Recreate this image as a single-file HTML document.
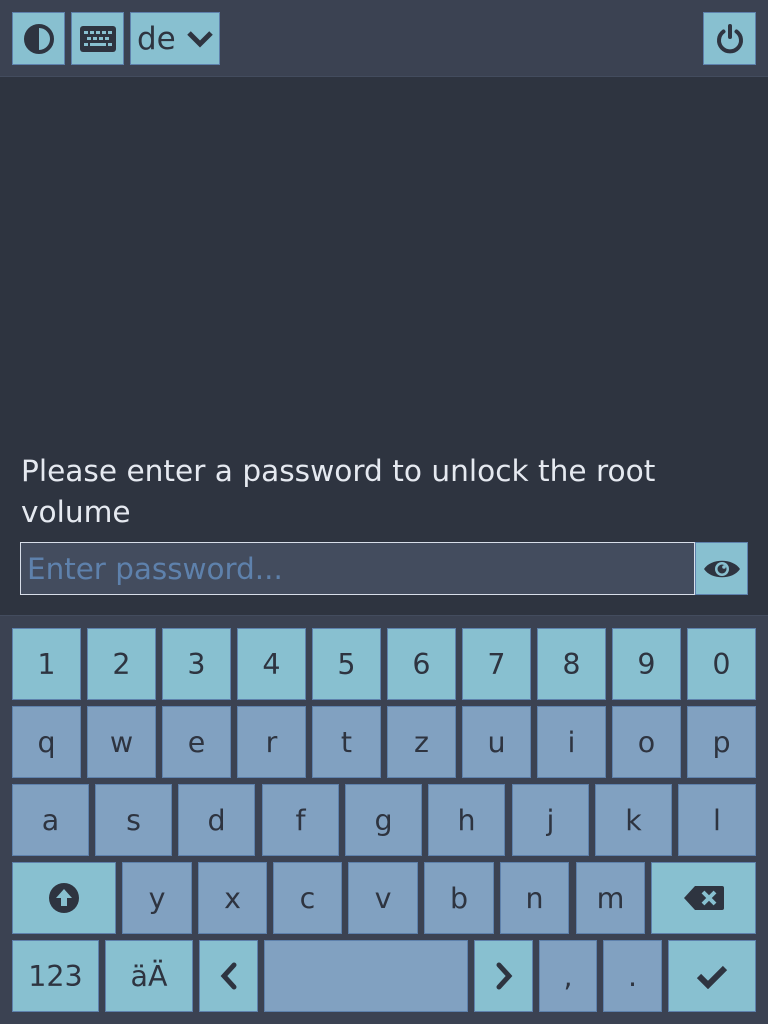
<!DOCTYPE html>
<html><head><meta charset="utf-8"><style>
*{margin:0;padding:0;box-sizing:border-box}
body{width:768px;height:1024px;background:#2e3440;position:relative;overflow:hidden;font-family:"DejaVu Sans","Liberation Sans",sans-serif;color:#2e3440}
.top{position:absolute;left:0;top:0;width:768px;height:77px;background:#3b4252;border-bottom:1px solid #434c5e}
.b{position:absolute;background:#88c0d0;border:1px solid #5e81ac;display:flex;align-items:center;justify-content:center}
.d{background:#81a1c1}
.k{font-size:28.5px}
.msg{position:absolute;left:21px;top:451px;color:#e5e9f0;font-size:29.6px;line-height:41px;width:720px}
.inp{position:absolute;left:20px;top:542px;width:675px;height:53px;background:#434c5e;border:1px solid #d8dee9;color:#5e81ac;font-size:29.4px;padding-left:6px;line-height:52px}
.kb{position:absolute;left:0;top:615px;width:768px;height:409px;background:#3b4252;border-top:1px solid #434c5e}
</style></head><body>
<div class="top"></div>
<div class="b" style="left:12px;top:12px;width:53px;height:53px"><svg width="32" height="32" viewBox="0 0 32 32"><circle cx="16" cy="16" r="13" fill="none" stroke="#2e3440" stroke-width="4"/><path d="M16 3a13 13 0 0 0 0 26z" fill="#2e3440"/></svg></div>
<div class="b" style="left:71px;top:12px;width:53px;height:53px"><svg width="38" height="28" viewBox="0 0 38 28"><rect x="1" y="1" width="36" height="26" rx="3" fill="#2e3440"/><g fill="#88c0d0"><rect x="5" y="6" width="4" height="3"/><rect x="11" y="6" width="4" height="3"/><rect x="17" y="6" width="4" height="3"/><rect x="23" y="6" width="4" height="3"/><rect x="29" y="6" width="4" height="3"/><rect x="8" y="12" width="4" height="3"/><rect x="14" y="12" width="4" height="3"/><rect x="20" y="12" width="4" height="3"/><rect x="26" y="12" width="4" height="3"/><rect x="5" y="18" width="4" height="3"/><rect x="11" y="18" width="16" height="3"/><rect x="29" y="18" width="4" height="3"/></g></svg></div>
<div class="b" style="left:130px;top:12px;width:90px;height:53px;justify-content:flex-start;padding-left:6px;font-size:31px">de<svg style="margin-left:10px" width="28" height="20" viewBox="0 0 28 20"><path d="M3 4l11 11L25 4" fill="none" stroke="#2e3440" stroke-width="5"/></svg></div>
<div class="b" style="left:703px;top:12px;width:53px;height:53px"><svg width="32" height="32" viewBox="0 0 32 32"><path d="M9.5 8.5a11 11 0 1 0 13 0" fill="none" stroke="#2e3440" stroke-width="4" stroke-linecap="round"/><path d="M16 3v11" stroke="#2e3440" stroke-width="4" stroke-linecap="round"/></svg></div>
<div class="msg">Please enter a password to unlock the root volume</div>
<div class="inp">Enter password...</div>
<div class="b" style="left:695px;top:542px;width:53px;height:53px"><svg width="38" height="26" viewBox="0 0 38 26"><path d="M1 13C8 2 30 2 37 13C30 24 8 24 1 13z" fill="#2e3440"/><circle cx="19" cy="13" r="7" fill="#88c0d0"/><circle cx="19" cy="13" r="4.5" fill="#2e3440"/><circle cx="21" cy="11" r="1.8" fill="#88c0d0"/></svg></div>
<div class="kb"></div>
<div class="b k" style="left:12px;top:628px;width:69px;height:72px">1</div>
<div class="b k" style="left:87px;top:628px;width:69px;height:72px">2</div>
<div class="b k" style="left:162px;top:628px;width:69px;height:72px">3</div>
<div class="b k" style="left:237px;top:628px;width:69px;height:72px">4</div>
<div class="b k" style="left:312px;top:628px;width:69px;height:72px">5</div>
<div class="b k" style="left:387px;top:628px;width:69px;height:72px">6</div>
<div class="b k" style="left:462px;top:628px;width:69px;height:72px">7</div>
<div class="b k" style="left:537px;top:628px;width:69px;height:72px">8</div>
<div class="b k" style="left:612px;top:628px;width:69px;height:72px">9</div>
<div class="b k" style="left:687px;top:628px;width:69px;height:72px">0</div>
<div class="b d k" style="left:12px;top:706px;width:69px;height:72px">q</div>
<div class="b d k" style="left:87px;top:706px;width:69px;height:72px">w</div>
<div class="b d k" style="left:162px;top:706px;width:69px;height:72px">e</div>
<div class="b d k" style="left:237px;top:706px;width:69px;height:72px">r</div>
<div class="b d k" style="left:312px;top:706px;width:69px;height:72px">t</div>
<div class="b d k" style="left:387px;top:706px;width:69px;height:72px">z</div>
<div class="b d k" style="left:462px;top:706px;width:69px;height:72px">u</div>
<div class="b d k" style="left:537px;top:706px;width:69px;height:72px">i</div>
<div class="b d k" style="left:612px;top:706px;width:69px;height:72px">o</div>
<div class="b d k" style="left:687px;top:706px;width:69px;height:72px">p</div>
<div class="b d k" style="left:12px;top:784px;width:77px;height:72px">a</div>
<div class="b d k" style="left:95px;top:784px;width:77px;height:72px">s</div>
<div class="b d k" style="left:178px;top:784px;width:77px;height:72px">d</div>
<div class="b d k" style="left:262px;top:784px;width:77px;height:72px">f</div>
<div class="b d k" style="left:345px;top:784px;width:77px;height:72px">g</div>
<div class="b d k" style="left:428px;top:784px;width:77px;height:72px">h</div>
<div class="b d k" style="left:512px;top:784px;width:77px;height:72px">j</div>
<div class="b d k" style="left:595px;top:784px;width:77px;height:72px">k</div>
<div class="b d k" style="left:678px;top:784px;width:78px;height:72px">l</div>
<div class="b" style="left:12px;top:862px;width:104px;height:72px"><svg width="32" height="32" viewBox="0 0 32 32"><circle cx="16" cy="16" r="15" fill="#2e3440"/><path d="M16 7l-8 9h5v8h6v-8h5z" fill="#88c0d0"/></svg></div>
<div class="b d k" style="left:122px;top:862px;width:70px;height:72px">y</div>
<div class="b d k" style="left:198px;top:862px;width:69px;height:72px">x</div>
<div class="b d k" style="left:273px;top:862px;width:69px;height:72px">c</div>
<div class="b d k" style="left:348px;top:862px;width:70px;height:72px">v</div>
<div class="b d k" style="left:424px;top:862px;width:70px;height:72px">b</div>
<div class="b d k" style="left:500px;top:862px;width:69px;height:72px">n</div>
<div class="b d k" style="left:576px;top:862px;width:69px;height:72px">m</div>
<div class="b" style="left:651px;top:862px;width:105px;height:72px"><svg width="42" height="26" viewBox="0 0 42 26"><path d="M12 1h27a2 2 0 0 1 2 2v20a2 2 0 0 1-2 2H12L1 13z" fill="#2e3440"/><path d="M20 7l12 12M32 7L20 19" stroke="#88c0d0" stroke-width="4"/></svg></div>
<div class="b k" style="left:12px;top:940px;width:87px;height:72px">123</div>
<div class="b k" style="left:105px;top:940px;width:88px;height:72px">äÄ</div>
<div class="b" style="left:199px;top:940px;width:59px;height:72px"><svg width="20" height="30" viewBox="0 0 20 30"><path d="M15 4L5 15l10 11" fill="none" stroke="#2e3440" stroke-width="5" stroke-linecap="round"/></svg></div>
<div class="b d" style="left:264px;top:940px;width:204px;height:72px"></div>
<div class="b" style="left:474px;top:940px;width:59px;height:72px"><svg width="20" height="30" viewBox="0 0 20 30"><path d="M5 4l10 11L5 26" fill="none" stroke="#2e3440" stroke-width="5" stroke-linecap="round"/></svg></div>
<div class="b d k" style="left:539px;top:940px;width:58px;height:72px">,</div>
<div class="b d k" style="left:603px;top:940px;width:59px;height:72px">.</div>
<div class="b" style="left:668px;top:940px;width:88px;height:72px"><svg width="34" height="26" viewBox="0 0 34 26"><path d="M4 13l9 9L30 5" fill="none" stroke="#2e3440" stroke-width="6"/></svg></div>
</body></html>
